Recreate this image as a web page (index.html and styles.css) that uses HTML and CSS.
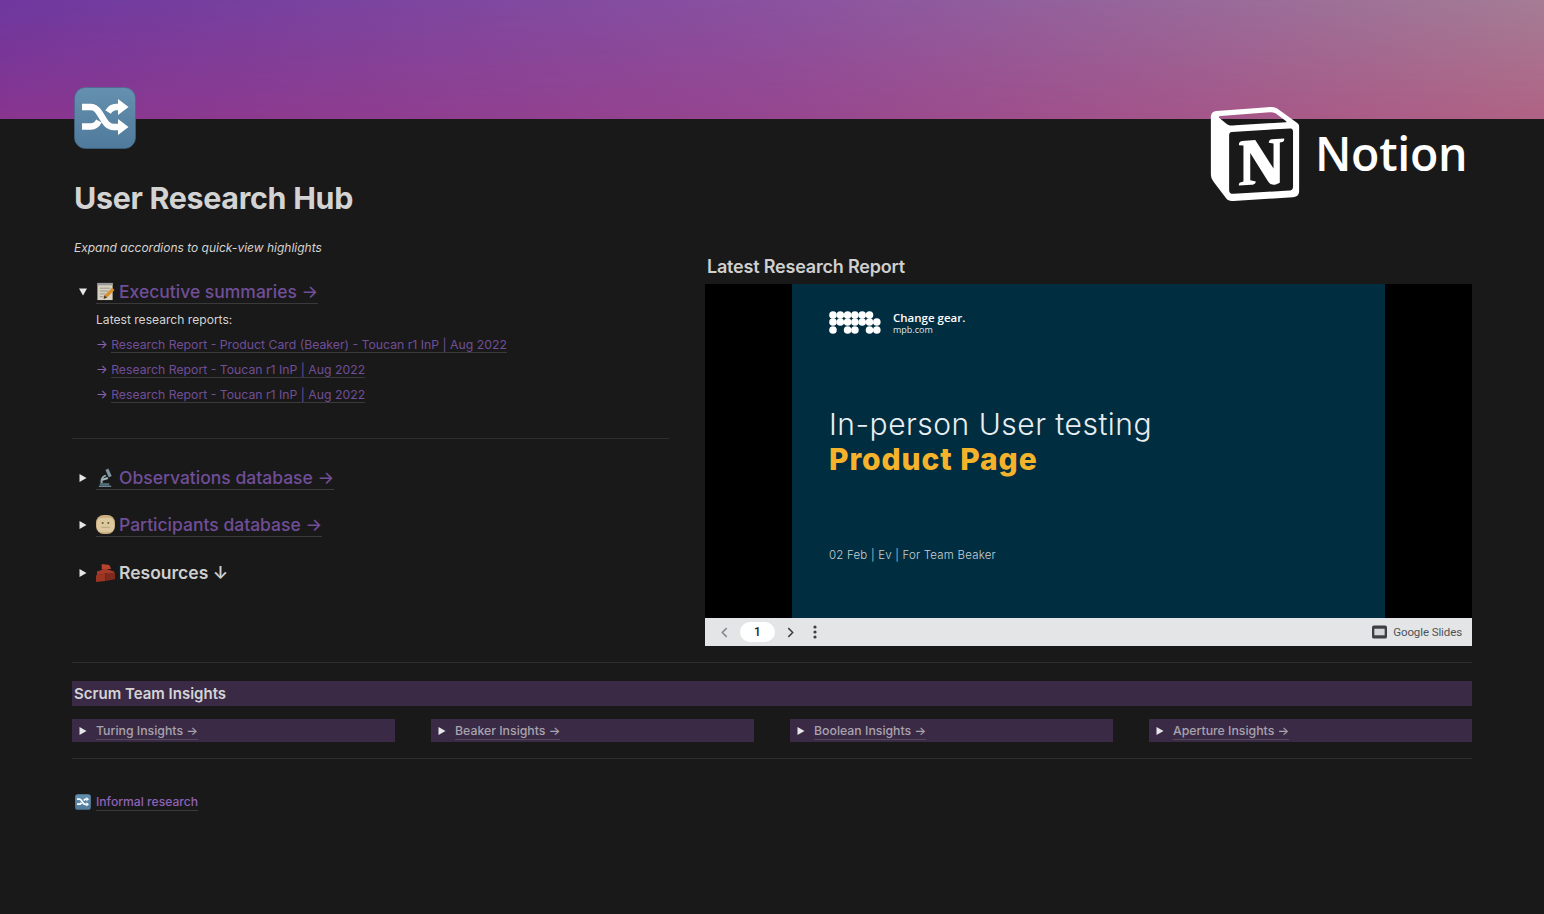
FILE: index.html
```html
<!DOCTYPE html>
<html lang="en">
<head>
<meta charset="utf-8">
<title>User Research Hub</title>
<link rel="stylesheet" href="styles.css">
</head>
<body>
<svg class="defs" width="0" height="0" aria-hidden="true">
  <defs>
    <linearGradient id="tile" x1="0" y1="0" x2="0" y2="1">
      <stop offset="0" stop-color="#6590af"/>
      <stop offset="1" stop-color="#507a9b"/>
    </linearGradient>
    <symbol id="shuffle" viewBox="0 0 62 62">
      <rect x="0.5" y="0.5" width="61" height="61" rx="11" fill="url(#tile)" stroke="#3f6a8a" stroke-opacity=".6"/>
      <path d="M8 20h9c4 0 6 2 8.500 6l5 8c2.500 4 5 6 9 6h6" fill="none" stroke="#fff" stroke-width="6.500"/>
      <path d="M8 39.500h9c4 0 6-2 8-5.500M34 25c2-3 4-5 8-5h3" fill="none" stroke="#fff" stroke-width="6.500"/>
      <path d="M44 12l10.500 8L44 28zM44 32l10.500 8L44 48z" fill="#fff"/>
    </symbol>
    <symbol id="memo" viewBox="0 0 20 20">
      <rect x="1.500" y="1" width="16" height="18" fill="#d8d2c0"/>
      <rect x="1.500" y="1" width="16" height="2.500" fill="#9a9a9c"/>
      <path d="M4 6.500h11M4 9.500h9M4 12.500h6M4 15.500h4" stroke="#8c8a84" stroke-width=".9"/>
      <path d="M8 17.500l1-3.500 8-8 2.500 2.500-8 8z" fill="#d9902c"/>
      <path d="M8 17.500l1-3.500 2.500 2.500z" fill="#3b3a38"/>
    </symbol>
    <symbol id="scope" viewBox="0 0 20 20">
      <path d="M3 18.500h13v1.500H3z" fill="#6d8794"/>
      <path d="M5 16c-1-4 1-8 5-9l1 1.500c-3 1-4.500 3.500-4 7.500z" fill="#8fa6b0"/>
      <path d="M10 2l3-1.500 3.500 8-3 1.500z" fill="#7f97a3"/>
      <path d="M6 11.500l6-2 1 2-6 2z" fill="#a8b9c0"/>
      <path d="M4 16h10v2.500H4z" fill="#56707d"/>
    </symbol>
    <symbol id="face" viewBox="0 0 20 20">
      <rect x="0" y="0" width="20" height="20" rx="8" fill="#c9ad80"/>
      <rect x="1" y="3" width="18" height="15" rx="5" fill="#dcc9a0"/>
      <circle cx="7" cy="8.500" r="1.100" fill="#6a5a3d"/>
      <circle cx="13" cy="8.500" r="1.100" fill="#6a5a3d"/>
      <path d="M5.500 13h9" stroke="#b9a47c"/>
    </symbol>
    <symbol id="bricks" viewBox="0 0 20 20">
      <path d="M6 1l8 1 2 4-10 1z" fill="#b8432f"/>
      <path d="M1 9l9-3 9 3v3l-9-1-9 2z" fill="#a63a28"/>
      <path d="M0 13l10-2v8l-10 1z" fill="#9c3524"/>
      <path d="M10 11l10-1v7l-10 2z" fill="#7e2a1c"/>
    </symbol>
    <symbol id="right" viewBox="0 0 8 8"><path d="M.5 0l7 4-7 4z" fill="#e6e6e6"/></symbol>
    <symbol id="down" viewBox="0 0 8 8"><path d="M0 .5h8l-4 7z" fill="#e6e6e6"/></symbol>
  </defs>
</svg>

<header class="cover"></header>

<main class="content">
  <svg class="page-icon"><use href="#shuffle"/></svg>
  <h1 class="title">User Research Hub</h1>

  <div class="columns">
    <section class="left">
      <p class="hint">Expand accordions to quick-view highlights</p>

      <div class="toggle first">
        <svg class="caret"><use href="#down"/></svg>
        <a class="big-link"><svg class="emoji"><use href="#memo"/></svg>Executive summaries →</a>
      </div>
      <div class="nested">
        <p class="nested-label">Latest research reports:</p>
        <p class="report"><span class="arrow">→</span> <a class="small-link">Research Report - Product Card (Beaker) - Toucan r1 InP | Aug 2022</a></p>
        <p class="report"><span class="arrow">→</span> <a class="small-link">Research Report - Toucan r1 InP | Aug 2022</a></p>
        <p class="report"><span class="arrow">→</span> <a class="small-link">Research Report - Toucan r1 InP | Aug 2022</a></p>
      </div>

      <hr class="rule inner">

      <div class="toggle">
        <svg class="caret"><use href="#right"/></svg>
        <a class="big-link"><svg class="emoji"><use href="#scope"/></svg>Observations database →</a>
      </div>
      <div class="toggle">
        <svg class="caret"><use href="#right"/></svg>
        <a class="big-link"><svg class="emoji"><use href="#face"/></svg>Participants database →</a>
      </div>
      <div class="toggle">
        <svg class="caret"><use href="#right"/></svg>
        <span class="big-text"><svg class="emoji"><use href="#bricks"/></svg>Resources ↓</span>
      </div>
    </section>

    <section class="right">
      <h2 class="embed-title">Latest Research Report</h2>
      <div class="embed">
        <div class="stage">
          <div class="slide">
            <div class="brand">
              <svg class="mpb" viewBox="0 0 52 24">
                <g fill="#fff">
                  <circle cx="4" cy="4" r="3.800"/><circle cx="11.300" cy="4" r="3.800"/><circle cx="18.600" cy="4" r="3.800"/><circle cx="25.900" cy="4" r="3.800"/><circle cx="33.200" cy="4" r="3.800"/><circle cx="40.500" cy="4" r="3.800"/>
                  <circle cx="4" cy="11" r="3.800"/><circle cx="11.300" cy="11" r="3.800"/><circle cx="18.600" cy="11" r="3.800"/><circle cx="25.900" cy="11" r="3.800"/><circle cx="33.200" cy="11" r="3.800"/><circle cx="40.500" cy="11" r="3.800"/><circle cx="47.800" cy="11" r="3.800"/>
                  <circle cx="4" cy="19" r="3.800"/><circle cx="18.600" cy="19" r="3.800"/><circle cx="25.900" cy="19" r="3.800"/><circle cx="40.500" cy="19" r="3.800"/><circle cx="47.800" cy="19" r="3.800"/>
                </g>
              </svg>
              <div class="tag">
                <span class="tag-main">Change gear.</span>
                <span class="tag-sub">mpb.com</span>
              </div>
            </div>
            <p class="slide-lead">In-person User testing</p>
            <p class="slide-head">Product Page</p>
            <p class="slide-meta">02 Feb | Ev | For Team Beaker</p>
          </div>
        </div>
        <div class="toolbar">
          <svg class="chev" viewBox="0 0 8 12"><path d="M6.500 1L1.500 6l5 5" fill="none" stroke="#80868b" stroke-width="1.700"/></svg>
          <span class="pager">1</span>
          <svg class="chev" viewBox="0 0 8 12"><path d="M1.500 1l5 5-5 5" fill="none" stroke="#3c4043" stroke-width="1.700"/></svg>
          <svg class="dots" viewBox="0 0 4 14"><g fill="#3c4043"><circle cx="2" cy="2" r="1.600"/><circle cx="2" cy="7" r="1.600"/><circle cx="2" cy="12" r="1.600"/></g></svg>
          <span class="spacer"></span>
          <svg class="slides-icon" viewBox="0 0 16 14"><rect width="16" height="14" rx="2" fill="#3c4043"/><rect x="2.500" y="3.500" width="11" height="7" fill="#d4d6d7"/></svg>
          <span class="slides-name">Google Slides</span>
        </div>
      </div>
    </section>
  </div>

  <hr class="rule team-top">
  <h2 class="team-title">Scrum Team Insights</h2>
  <div class="teams">
    <div class="team"><svg class="caret"><use href="#right"/></svg><a class="team-link">Turing Insights →</a></div>
    <div class="team"><svg class="caret"><use href="#right"/></svg><a class="team-link">Beaker Insights →</a></div>
    <div class="team"><svg class="caret"><use href="#right"/></svg><a class="team-link">Boolean Insights →</a></div>
    <div class="team"><svg class="caret"><use href="#right"/></svg><a class="team-link">Aperture Insights →</a></div>
  </div>
  <hr class="rule team-bottom">

  <div class="informal">
    <svg class="mini-icon"><use href="#shuffle"/></svg>
    <a class="informal-link">Informal research</a>
  </div>
</main>

<div class="notion-logo">
  <svg class="notion-mark" viewBox="0 0 24 24" preserveAspectRatio="none"><path fill="#fff" d="M4.459 4.208c.746.606 1.026.56 2.428.466l13.215-.793c.28 0 .047-.28-.046-.326L17.860 1.968c-.42-.326-.981-.7-2.055-.607L3.010 2.295c-.466.046-.56.28-.374.466zm.793 3.080v13.904c0 .747.373 1.027 1.214.98l14.523-.84c.841-.046.935-.56.935-1.167V6.354c0-.606-.233-.933-.748-.887l-15.177.887c-.56.047-.747.327-.747.933zm14.337.745c.093.42 0 .84-.42.888l-.7.14v10.264c-.608.327-1.168.514-1.635.514-.748 0-.935-.234-1.495-.933l-4.577-7.186v6.952L12.210 19s0 .84-1.168.84l-3.222.186c-.093-.186 0-.653.327-.746l.84-.233V9.854L7.822 9.760c-.094-.42.140-1.026.793-1.073l3.456-.233 4.764 7.279v-6.440l-1.215-.139c-.093-.514.28-.887.747-.933zM1.936 1.035l13.310-.98c1.634-.14 2.055-.047 3.082.7l4.249 2.986c.7.513.934.653.934 1.213v16.378c0 1.026-.373 1.634-1.680 1.726l-15.458.934c-.98.047-1.448-.093-1.962-.747l-3.129-4.060c-.56-.747-.793-1.306-.793-1.960V2.667c0-.839.374-1.540 1.447-1.632z"/></svg>
  <span class="notion-word">Notion</span>
</div>
</body>
</html>
```

FILE: styles.css
```css
* { box-sizing: border-box; }
html, body { margin: 0; height: 100%; }
body {
  position: relative;
  height: 914px;
  overflow: hidden;
  background: #191919;
  color: #d4d4d4;
  font-family: Inter, "Liberation Sans", sans-serif;
}
.defs { position: absolute; }
p, h1, h2 { margin: 0; }
a { color: inherit; }

.cover {
  position: relative;
  height: 119px;
  background: linear-gradient(90deg, #88358f 0%, #96468f 50%, #b06384 100%);
}
.cover::before {
  content: "";
  position: absolute;
  inset: 0;
  background: linear-gradient(90deg, #4a3cb4 0%, #7862b8 50%, #94a0ac 100%);
  opacity: .42;
  -webkit-mask-image: linear-gradient(180deg, #000 0%, transparent 100%);
  mask-image: linear-gradient(180deg, #000 0%, transparent 100%);
}
.content { padding: 0 72px; }
.page-icon {
  display: block;
  width: 62px;
  height: 62px;
  margin: -32px 0 0 2px;
  position: relative;
}
.title {
  margin: 31px 0 0 2px;
  font-size: 30.400px;
  line-height: 36px;
  font-weight: 700;
  letter-spacing: -.3px;
  color: #d3d3d3;
}
.columns {
  display: grid;
  grid-template-columns: 597px 767px;
  column-gap: 36px;
  margin-top: 13px;
  height: 433px;
}
.hint {
  margin: 10px 0 0 2px;
  font-size: 12px;
  line-height: 18px;
  font-style: italic;
  color: #d4d4d4;
}
.toggle {
  display: flex;
  align-items: center;
  height: 30px;
  margin-top: 17.500px;
  padding-left: 7px;
}
.toggle.first { margin-top: 20px; }
.caret {
  width: 8px;
  height: 8px;
  flex: none;
  margin-right: 9px;
}
.big-link, .big-text {
  display: inline-flex;
  align-items: center;
  font-size: 17.500px;
  font-weight: 500;
  line-height: 23px;
  white-space: nowrap;
}
.big-link {
  color: #704e98;
  border-bottom: 1px solid #3a3a3a;
}
.big-text { color: #cfcfcf; font-weight: 600; }
.emoji {
  width: 19px;
  height: 19px;
  margin-right: 4px;
  flex: none;
}
.nested { padding-left: 24px; }
.nested-label {
  margin-top: 2px;
  font-size: 12.100px;
  line-height: 21px;
  color: #d4d4d4;
}
.report {
  margin-top: 4px;
  font-size: 12.250px;
  line-height: 21px;
  white-space: nowrap;
  color: #704e98;
}
.arrow { color: #8a63b3; }
.small-link { border-bottom: 1px solid #3a3a3a; }
.rule {
  margin: 0;
  border: 0;
  height: 1px;
  background: #2f2f2f;
}
.inner { margin-top: 33px; margin-bottom: 23.500px; }
.embed-title {
  margin: 26px 0 0 2px;
  font-size: 18px;
  line-height: 24px;
  font-weight: 600;
  letter-spacing: -.2px;
  color: #cfcfcf;
}
.embed { margin-top: 5px; }
.stage {
  height: 334px;
  padding: 0 87px;
  background: #000;
}
.slide {
  height: 100%;
  padding: 27px 37px 0;
  background: #012d40;
  color: #fff;
  font-family: Inter, sans-serif;
}
.brand { display: flex; align-items: center; gap: 12px; }
.mpb { width: 52px; height: 24px; flex: none; }
.tag { display: flex; flex-direction: column; font-family: "Open Sans", sans-serif; }
.tag-main { font-size: 11.500px; line-height: 12px; font-weight: 600; }
.tag-sub { font-size: 9px; line-height: 11px; color: #dfe6ea; }
.slide-lead {
  margin-top: 71px;
  font-size: 30px;
  line-height: 36px;
  font-weight: 300;
  letter-spacing: .5px;
  color: #e9eef0;
}
.slide-head {
  font-size: 30px;
  line-height: 35px;
  font-weight: 800;
  letter-spacing: .9px;
  color: #f5b32c;
}
.slide-meta {
  margin-top: 70px;
  font-size: 11.500px;
  line-height: 16px;
  font-weight: 300;
  letter-spacing: .2px;
  color: #c5d0d6;
}
.toolbar {
  display: flex;
  align-items: center;
  height: 28px;
  padding: 0 10px 0 16px;
  background: #e3e5e6;
  font-family: Roboto, sans-serif;
}
.chev { width: 7px; height: 11px; flex: none; }
.pager {
  width: 35px;
  height: 20px;
  margin: 0 12px;
  border-radius: 10px;
  background: #fff;
  color: #202124;
  font-size: 12px;
  font-weight: 500;
  line-height: 20px;
  text-align: center;
}
.dots { width: 4px; height: 14px; margin-left: 19px; }
.spacer { flex: 1; }
.slides-icon { width: 15px; height: 14px; margin-right: 6px; }
.slides-name { font-size: 11.500px; color: #4f5357; letter-spacing: -.1px; }

.team-top { margin-top: 0; }
.team-title {
  height: 25px;
  margin-top: 18px;
  padding-left: 2px;
  background: #3a2a46;
  font-size: 15px;
  line-height: 25px;
  font-weight: 600;
  color: #d4d4d4;
}
.teams {
  display: grid;
  grid-template-columns: repeat(4, 1fr);
  column-gap: 36px;
  margin-top: 13px;
}
.team {
  display: flex;
  align-items: center;
  height: 23px;
  padding: 1px 0 0 7px;
  background: #3a2a46;
}
.team-link {
  font-size: 12.300px;
  line-height: 16px;
  font-weight: 500;
  color: #a8a3ad;
  border-bottom: 1px solid #534a5c;
}
.team-bottom { margin-top: 16px; }
.informal {
  display: flex;
  align-items: center;
  margin: 34px 0 0 3px;
  height: 18px;
}
.mini-icon { width: 16px; height: 16px; margin-right: 5px; flex: none; }
.informal-link {
  font-size: 12.150px;
  line-height: 16px;
  font-weight: 500;
  color: #8f62b8;
  border-bottom: 1px solid #3a3a3a;
}

.notion-logo {
  position: absolute;
  top: 107px;
  left: 1209px;
  display: flex;
  align-items: center;
  gap: 14px;
}
.notion-mark { width: 92px; height: 94px; flex: none; }
.notion-word {
  margin-top: -2px;
  font-family: "Open Sans", sans-serif;
  font-size: 46.500px;
  line-height: 60px;
  font-weight: 600;
  color: #fff;
  letter-spacing: -.3px;
}
```
